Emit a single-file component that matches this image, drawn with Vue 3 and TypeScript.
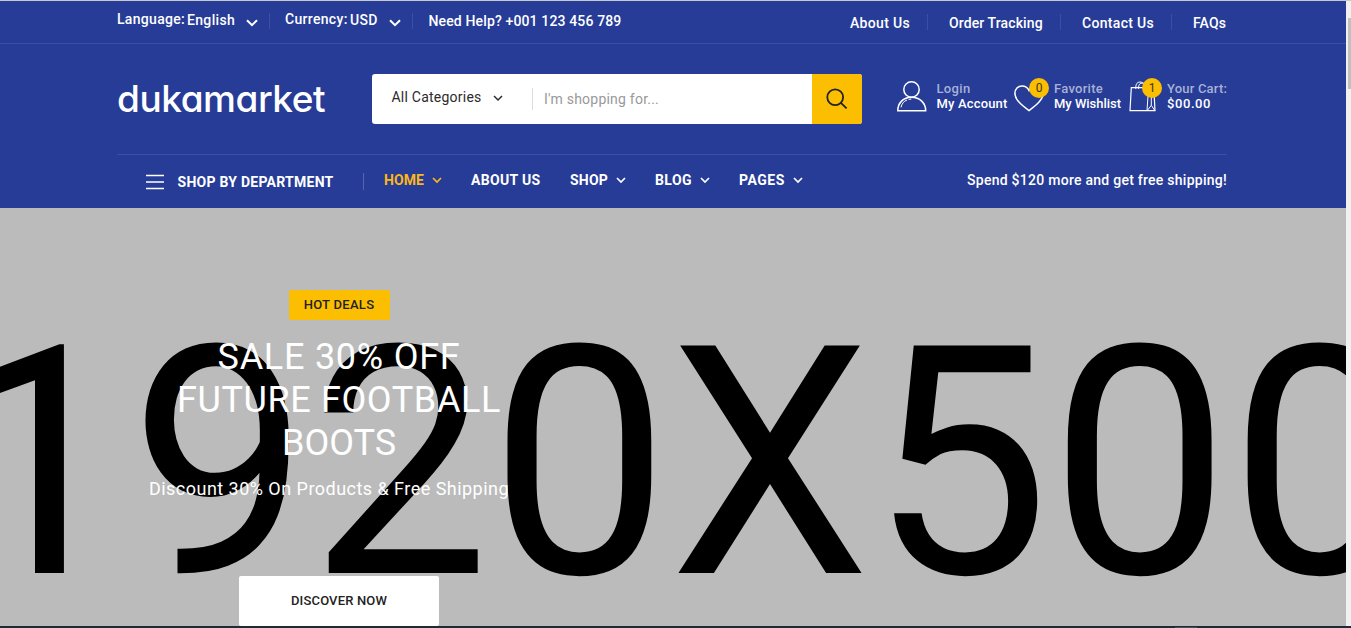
<script setup lang="ts">
interface NavItem {
  label: string
  key: string
  menu: boolean
  active?: boolean
}

const links = [
  { label: 'About Us', key: 'about' },
  { label: 'Order Tracking', key: 'tracking' },
  { label: 'Contact Us', key: 'contact' },
  { label: 'FAQs', key: 'faqs' },
]

const nav: NavItem[] = [
  { label: 'HOME', key: 'n-home', menu: true, active: true },
  { label: 'ABOUT US', key: 'n-about', menu: false },
  { label: 'SHOP', key: 'n-shop', menu: true },
  { label: 'BLOG', key: 'n-blog', menu: true },
  { label: 'PAGES', key: 'n-pages', menu: true },
]

const headline = [
  { text: 'SALE 30% OFF', key: 'h-sale' },
  { text: 'FUTURE FOOTBALL', key: 'h-future' },
  { text: 'BOOTS', key: 'h-boots' },
]
</script>

<template>
  <div class="window">
    <div class="page">
      <header class="header">
        <div class="topbar">
          <div class="container topbar-row">
            <div class="picker language">
              <span class="picker-name">Language:</span>
              <span class="picker-value">English</span>
              <svg class="chev-lg" viewBox="0 0 12 8"><path d="M1 1.2 6 6.2 11 1.2" /></svg>
            </div>
            <div class="picker currency">
              <span class="picker-name">Currency:</span>
              <span class="picker-value">USD</span>
              <svg class="chev-lg" viewBox="0 0 12 8"><path d="M1 1.2 6 6.2 11 1.2" /></svg>
            </div>
            <div class="help">Need Help? +001 123 456 789</div>
            <nav class="links">
              <a v-for="l in links" :key="l.key" class="link" :class="l.key">{{ l.label }}</a>
            </nav>
          </div>
        </div>

        <div class="container main-row">
          <div class="logo">dukamarket</div>
          <div class="search">
            <div class="category">
              <span>All Categories</span>
              <svg class="chev-sm" viewBox="0 0 10 7"><path d="M1 1 5 5 9 1" /></svg>
            </div>
            <div class="query">I'm shopping for...</div>
            <div class="search-btn">
              <svg viewBox="0 0 22 22"><circle cx="9.2" cy="9.2" r="7.9" /><path d="M14.9 14.9 20.6 20.4" /></svg>
            </div>
          </div>

          <div class="action account">
            <svg class="ico" viewBox="0 0 30 31">
              <circle cx="14.5" cy="8.5" r="7.7" />
              <path d="M.8 29.7C.8 22 6.2 16.3 14.5 16.3S28.7 22 28.7 29.7Z" />
              <path class="thin" d="M4 26.4C4.8 22.6 6.8 20.2 10 19M11.6 18.4 14.4 18" />
            </svg>
            <div class="action-text"><span class="muted login">Login</span><span class="strong myacc">My Account</span></div>
          </div>
          <div class="action wish">
            <svg class="ico" viewBox="0 0 30 31">
              <path d="M15 29.6C7 23.6.9 18.6.9 12.3.9 8 4 5 8 5c3 0 5.600 1.500 7 4.400C16.400 6.500 19 5 22 5c4 0 7.100 3 7.100 7.300C29.100 18.600 23 23.600 15 29.600Z" />
            </svg>
            <span class="badge">0</span>
            <div class="action-text"><span class="muted fav">Favorite</span><span class="strong mywish">My Wishlist</span></div>
          </div>
          <div class="action cart">
            <svg class="ico" viewBox="0 0 30 31">
              <path class="bag" d="M2.300 6.700H24.800L26 29.700H1Z" />
              <path class="thin" d="M6.800 8V6C6.800 2.800 8.500 1 11 1s4.300 1.800 4.300 5M9.600 8V6C9.600 3.500 11.200 2 13.500 2s4 1.500 4 4" />
              <path class="thin" d="M19.600 7 18 29.500M22.300 7V24.300L18.300 29.500M22.300 24.300 25.800 29.500" />
            </svg>
            <span class="badge">1</span>
            <div class="action-text"><span class="muted yourcart">Your Cart:</span><span class="strong total">$00.00</span></div>
          </div>
        </div>

        <div class="container nav-row">
          <div class="dept">
            <svg class="burger" viewBox="0 0 18 16"><path d="M0 1.500H18M0 8H18M0 14.500H18" /></svg>
            <span>SHOP BY DEPARTMENT</span>
          </div>
          <nav class="menu">
            <a v-for="n in nav" :key="n.key" class="menu-item" :class="[n.key, { active: n.active }]">
              <span>{{ n.label }}</span>
              <svg v-if="n.menu" class="chev-sm bold" viewBox="0 0 10 7"><path d="M1 1 5 5 9 1" /></svg>
            </a>
          </nav>
          <div class="promo">Spend $120 more and get free shipping!</div>
        </div>
      </header>

      <section class="hero">
        <div class="hero-size">1920X500</div>
        <div class="hero-content">
          <span class="tag">HOT DEALS</span>
          <h1 class="title">
            <span v-for="h in headline" :key="h.key" :class="h.key">{{ h.text }}</span>
          </h1>
          <p class="sub">Discount 30% On Products &amp; Free Shipping</p>
          <a class="cta">DISCOVER NOW</a>
        </div>
      </section>
    </div>
    <aside class="scrollbar"><div class="thumb"></div></aside>
    <footer class="edge"><i></i></footer>
  </div>
</template>

<style>
html,
body {
  margin: 0;
  overflow: hidden;
}
</style>

<style scoped>
* {
  box-sizing: border-box;
}
.window {
  display: grid;
  grid-template-columns: 1346px 5px;
  grid-template-rows: 625px 2px;
  width: 1351px;
  height: 628px;
  border-top: 1px solid #c8c9cc;
  overflow: hidden;
  font-family: Roboto, 'Liberation Sans', sans-serif;
  font-size: 14px;
  font-weight: 500;
  color: #fff;
  white-space: nowrap;
}
.page {
  overflow: hidden;
  min-width: 0;
}
.header {
  height: 207px;
  background: #263c97;
}
.container {
  width: 1110px;
  margin-left: 117px;
}
svg {
  display: block;
  flex: none;
  fill: none;
  stroke: currentColor;
}
.topbar {
  height: 43px;
  border-bottom: 1px solid #3c50a1;
}
.topbar-row {
  display: flex;
}
.picker {
  display: flex;
  height: 16px;
  margin-top: 12px;
  border-right: 1px solid #3c50a1;
}
.picker-name {
  line-height: 13px;
  letter-spacing: 0.31px;
}
.picker-value {
  line-height: 15px;
  letter-spacing: 0.33px;
}
.language {
  width: 153px;
}
.language .picker-name {
  width: 70px;
}
.language .picker-value {
  width: 59px;
}
.currency {
  width: 143px;
  padding-left: 15px;
}
.currency .picker-name {
  width: 65px;
}
.currency .picker-value {
  width: 39px;
}
.chev-lg {
  width: 12px;
  height: 8px;
  margin-top: 6px;
  stroke-width: 2;
}
.help {
  margin-left: 15.500px;
  line-height: 41px;
  letter-spacing: 0.14px;
}
.links {
  display: flex;
  margin: 13px 0 0 auto;
}
.link {
  height: 16px;
  line-height: 18px;
  border-right: 1px solid #3c50a1;
}
.about {
  width: 78px;
  letter-spacing: 0.33px;
}
.tracking {
  width: 133px;
  padding-left: 21px;
  letter-spacing: 0.11px;
}
.contact {
  width: 111px;
  padding-left: 21px;
  letter-spacing: 0.31px;
}
.faqs {
  width: 55px;
  padding-left: 21px;
  border: 0;
  letter-spacing: 0.12px;
}
.main-row {
  display: flex;
  height: 111px;
  border-bottom: 1px solid #3c50a1;
}
.logo {
  width: 255px;
  height: 50px;
  margin-top: 30px;
  font-family: Inter, Roboto, sans-serif;
  font-feature-settings: 'cv11';
  font-size: 37px;
  font-weight: 500;
  line-height: 50px;
  letter-spacing: -0.45px;
}
.search {
  display: flex;
  width: 490px;
  height: 50px;
  margin-top: 30px;
  border-radius: 3px;
  background: #fff;
  overflow: hidden;
  font-weight: 400;
}
.category {
  display: flex;
  width: 161px;
  height: 22px;
  margin-top: 14px;
  padding-left: 19.500px;
  border-right: 1px solid #ddd;
  color: #2d2a2a;
  line-height: 19px;
  letter-spacing: 0.23px;
}
.category span {
  width: 101.500px;
}
.chev-sm {
  width: 10px;
  height: 7px;
  stroke-width: 1.5;
}
.category .chev-sm {
  margin-top: 7px;
}
.query {
  width: 279px;
  padding-left: 11px;
  color: #999;
  line-height: 51px;
  letter-spacing: 0.22px;
}
.search-btn {
  width: 50px;
  height: 50px;
  padding: 14px;
  background: #fcbe00;
  color: #222;
}
.search-btn svg {
  width: 22px;
  height: 22px;
  stroke-width: 1.8;
}
.action {
  position: relative;
  display: flex;
  margin-top: 37px;
  height: 31px;
  font-size: 13px;
}
.account {
  width: 117px;
  margin-left: 35px;
}
.wish {
  width: 115px;
}
.cart {
  width: 98px;
}
.ico {
  width: 30px;
  height: 31px;
  stroke-width: 1.5;
}
.bag {
  stroke-width: 1.2;
}
.thin {
  stroke-width: 1;
}
.action-text {
  display: flex;
  flex-direction: column;
  margin-left: 10px;
}
.action-text span {
  line-height: 15px;
}
.account .action-text {
  margin-left: 9.500px;
}
.cart .action-text {
  margin-left: 8px;
}
.muted {
  color: #a8b1d5;
}
.login {
  letter-spacing: 0.33px;
}
.myacc {
  letter-spacing: 0.17px;
}
.fav {
  letter-spacing: 0.28px;
}
.mywish {
  letter-spacing: -0.03px;
}
.yourcart {
  letter-spacing: 0.19px;
}
.total {
  letter-spacing: 0.57px;
}
.badge {
  position: absolute;
  left: 15px;
  top: -3px;
  width: 20px;
  height: 20px;
  border-radius: 50%;
  background: #fcbe00;
  color: #3b3320;
  font-size: 12px;
  font-weight: 400;
  line-height: 20px;
  text-align: center;
}
.cart .badge {
  left: 13px;
}
.nav-row {
  display: flex;
  height: 53px;
  font-weight: 700;
}
.dept {
  display: flex;
  width: 247px;
  height: 17px;
  margin-top: 18px;
  padding-left: 29px;
  border-right: 1px solid #5566ae;
  line-height: 18px;
  letter-spacing: 0.26px;
}
.burger {
  width: 18px;
  height: 16px;
  margin: 1px 13.500px 0 0;
  stroke-width: 1.7;
}
.menu {
  display: flex;
  margin: 18px 0 0 20px;
  line-height: 15px;
}
.menu-item {
  display: flex;
  justify-content: space-between;
  height: 14px;
}
.bold {
  margin-top: 4px;
  stroke-width: 1.7;
}
.active {
  color: #fcb71b;
}
.n-home {
  width: 58px;
  letter-spacing: 0.08px;
}
.n-about {
  width: 70px;
  margin-left: 29px;
  letter-spacing: 0.34px;
}
.n-shop {
  width: 56px;
  margin-left: 29px;
  letter-spacing: 0.2px;
}
.n-blog {
  width: 55px;
  margin-left: 29px;
  letter-spacing: 0.43px;
}
.n-pages {
  width: 63.500px;
  margin-left: 29px;
  letter-spacing: 0.55px;
}
.promo {
  margin: 18px 0 0 auto;
  font-weight: 500;
  line-height: 15px;
  letter-spacing: 0.26px;
}
.hero {
  position: relative;
  height: 418px;
  background: #bbb;
}
.hero-size {
  position: absolute;
  left: -50px;
  top: 96px;
  color: #000;
  font-size: 320px;
  font-weight: 400;
  line-height: 320px;
}
.hero-content {
  position: relative;
  display: flex;
  flex-direction: column;
  align-items: center;
  width: 444px;
  margin-left: 117px;
  padding-top: 82px;
}
.tag {
  width: 101px;
  height: 30px;
  border-radius: 2px;
  background: #fcbe00;
  color: #222;
  font-size: 13px;
  line-height: 30px;
  letter-spacing: 0.29px;
  text-align: center;
}
.title {
  display: flex;
  flex-direction: column;
  align-items: center;
  margin: 16px 0 0;
  font-size: 36px;
  font-weight: 400;
  line-height: 43px;
}
.h-sale {
  letter-spacing: 0.75px;
}
.h-future {
  letter-spacing: 0.62px;
}
.sub {
  margin: 14px 0 0 -20px;
  font-size: 18px;
  font-weight: 400;
  line-height: 20px;
  letter-spacing: 0.47px;
}
.cta {
  width: 200px;
  height: 50px;
  margin-top: 77px;
  border-radius: 2px;
  background: #fff;
  color: #222;
  font-size: 13px;
  line-height: 50px;
  letter-spacing: 0.16px;
  text-align: center;
}
.scrollbar {
  padding: 17px 0 0 2px;
  background: #f1f1f1;
}
.thumb {
  height: 71px;
  background: #c1c1c1;
}
.edge {
  grid-column: 1 / -1;
  background: #1d2b36;
}
.edge i {
  display: block;
  width: 22px;
  height: 1px;
  margin: 1px 0 0 1175px;
  background: #43525c;
}
</style>
